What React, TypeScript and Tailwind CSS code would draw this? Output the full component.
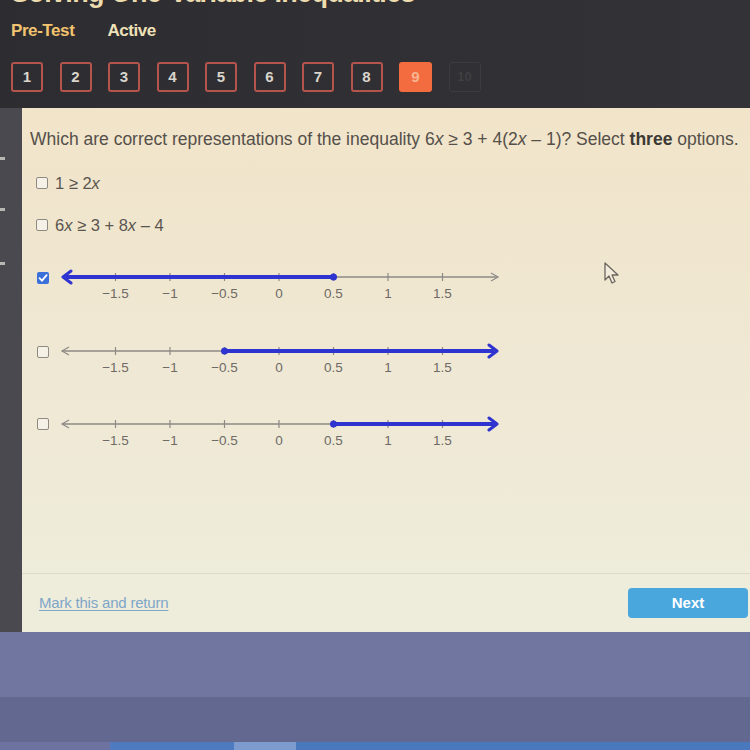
const tick = (v: number) => 224 + v * 109;

const labels: [number, string][] = [
  [-1.5, "\u22121.5"],
  [-1, "\u22121"],
  [-0.5, "\u22120.5"],
  [0, "0"],
  [0.5, "0.5"],
  [1, "1"],
  [1.5, "1.5"],
];

interface NumberLineProps {
  from: number | null; // null = left arrow
  to: number | null; // null = right arrow
}

function NumberLine({ from, to }: NumberLineProps) {
  const left = 7;
  const right = 443;
  const y = 8;
  const x1 = from === null ? left + 4 : tick(from);
  const x2 = to === null ? right - 4 : tick(to);
  return (
    <svg width="460" height="36" viewBox="0 0 460 36" className="block">
      <line x1={left} y1={y} x2={right} y2={y} stroke="#8d8a86" strokeWidth="1.4" />
      {from !== null && (
        <path d={`M${left + 7} ${y - 4} L${left} ${y} L${left + 7} ${y + 4}`} fill="none" stroke="#8d8a86" strokeWidth="1.2" />
      )}
      {to !== null && (
        <path d={`M${right - 7} ${y - 4} L${right} ${y} L${right - 7} ${y + 4}`} fill="none" stroke="#8d8a86" strokeWidth="1.2" />
      )}
      {labels.map(([v, t]) => (
        <g key={t}>
          <line x1={tick(v)} y1={y - 4} x2={tick(v)} y2={y + 4} stroke="#8d8a86" strokeWidth="1.2" />
          <text
            x={tick(v)}
            y={y + 21}
            textAnchor="middle"
            fontSize="13.5"
            fill="#6e6a66"
            fontFamily="'Liberation Sans', Arial, sans-serif"
          >
            {t}
          </text>
        </g>
      ))}
      <line x1={x1} y1={y} x2={x2} y2={y} stroke="#2f33cf" strokeWidth="4" />
      {from === null && (
        <path d={`M${left + 9} ${y - 6} L${left + 1} ${y} L${left + 9} ${y + 6}`} fill="none" stroke="#2f33cf" strokeWidth="3" strokeLinejoin="round" strokeLinecap="round" />
      )}
      {to === null && (
        <path d={`M${right - 9} ${y - 6} L${right - 1} ${y} L${right - 9} ${y + 6}`} fill="none" stroke="#2f33cf" strokeWidth="3" strokeLinejoin="round" strokeLinecap="round" />
      )}
      {from !== null && <circle cx={x1} cy={y} r="3.5" fill="#2f33cf" />}
      {to !== null && <circle cx={x2} cy={y} r="3.5" fill="#2f33cf" />}
    </svg>
  );
}

function Checkbox({ checked = false }: { checked?: boolean }) {
  if (checked) {
    return (
      <span className="shrink-0 w-[12px] h-[12px] rounded-[2px] bg-[#3b6fd9] flex items-center justify-center">
        <svg width="10" height="10" viewBox="0 0 10 10">
          <path d="M1.5 5.2 L4 7.6 L8.6 2.2" fill="none" stroke="white" strokeWidth="1.8" strokeLinecap="round" />
        </svg>
      </span>
    );
  }
  return <span className="shrink-0 block w-[12px] h-[12px] rounded-[2px] border border-[#8e8a84] bg-[#f5f1e6]" />;
}

export default function App() {
  const boxes = [1, 2, 3, 4, 5, 6, 7, 8];
  return (
    <div
      className="w-[750px] h-[750px] overflow-hidden flex flex-col bg-[#2e2d31]"
      style={{ fontFamily: "'Liberation Sans', Arial, sans-serif" }}
    >
      {/* header */}
      <div className="h-[108px] shrink-0 px-[11px] flex flex-col bg-gradient-to-r from-[#2d2c30] to-[#333236]">
        <h1 className="mt-[-20px] text-[27px] leading-none font-bold text-[#ecdcae] tracking-tight whitespace-nowrap">
          Solving One-Variable Inequalities
        </h1>
        <div className="mt-[14px] flex gap-[33px] text-[17px] font-bold leading-[20px] tracking-tight">
          <span className="text-[#f2c46f]">Pre-Test</span>
          <span className="text-[#efe2b8]">Active</span>
        </div>
        <div className="mt-[21px] flex gap-[16.5px]">
          {boxes.map((n) => (
            <div
              key={n}
              className="w-[32px] h-[30px] rounded-[3px] border-2 border-[#b5544d] flex items-center justify-center text-[15px] font-bold text-[#d9d5cc]"
            >
              {n}
            </div>
          ))}
          <div className="w-[33px] h-[30px] rounded-[3px] bg-[#f36c3f] flex items-center justify-center text-[15px] font-bold text-[#f7b592]">
            9
          </div>
          <div className="w-[32px] h-[30px] rounded-[3px] border border-[#3c3b3f] flex items-center justify-center text-[13px] font-bold text-[#3f3e42]">
            10
          </div>
        </div>
      </div>

      {/* body */}
      <div className="h-[524px] shrink-0 flex">
        <div className="w-[22px] shrink-0 bg-[#4a4950] flex flex-col">
          <span className="mt-[49px] w-[5px] h-[3px] bg-[#b9b7b4]" />
          <span className="mt-[48px] w-[5px] h-[3px] bg-[#b9b7b4]" />
          <span className="mt-[51px] w-[5px] h-[3px] bg-[#b9b7b4]" />
        </div>
        <div className="relative flex-1 flex flex-col bg-gradient-to-b from-[#f1e4c9] via-[#efe8d4] to-[#eeeddc]">
          <div className="pl-[8px] pt-[21px] flex flex-col">
            <p className="text-[17.5px] leading-[20px] text-[#55504a] whitespace-nowrap">
              Which are correct representations of the inequality 6<i>x</i> ≥ 3 + 4(2<i>x</i> – 1)? Select{" "}
              <b className="text-[#3d3935]">three</b> options.
            </p>
            <div className="mt-[24px] ml-[6px] flex items-center gap-[7px] text-[16.5px] leading-[20px] text-[#5a5550]">
              <Checkbox />
              <span>
                1 ≥ 2<i>x</i>
              </span>
            </div>
            <div className="mt-[22px] ml-[6px] flex items-center gap-[7px] text-[16.5px] leading-[20px] text-[#5a5550]">
              <Checkbox />
              <span>
                6<i>x</i> ≥ 3 + 8<i>x</i> – 4
              </span>
            </div>

            <div className="mt-[34px] ml-[7px] flex items-start gap-[6px]">
              <span className="mt-[3px]">
                <Checkbox checked />
              </span>
              <NumberLine from={null} to={0.5} />
            </div>
            <div className="mt-[38px] ml-[7px] flex items-start gap-[6px]">
              <span className="mt-[3px]">
                <Checkbox />
              </span>
              <NumberLine from={-0.5} to={null} />
            </div>
            <div className="mt-[37px] ml-[7px] flex items-start gap-[6px]">
              <span className="mt-[2px]">
                <Checkbox />
              </span>
              <NumberLine from={0.5} to={null} />
            </div>
          </div>

          {/* cursor */}
          <svg className="absolute left-[581px] top-[153px]" width="18" height="26" viewBox="0 0 18 26">
            <path
              d="M2 2 L2 19 L6 15 L9 22 L12 20.5 L9 14 L15 14 Z"
              fill="#f3ecdc"
              stroke="#6a6660"
              strokeWidth="1.3"
              strokeLinejoin="round"
            />
          </svg>

          <div className="mt-auto border-t border-[#dcdacb] flex items-center justify-between pt-[14px] pb-[14px] pl-[17px]">
            <a className="text-[15px] text-[#7ea6c8] underline underline-offset-2 tracking-[-0.2px]">Mark this and return</a>
            <button className="w-[120px] h-[30px] mr-[2px] rounded-[4px] bg-[#4aa7de] text-white text-[15px] font-bold">
              Next
            </button>
          </div>
        </div>
      </div>

      {/* below panel */}
      <div className="h-[65px] shrink-0 bg-[#7176a1]" />
      <div className="h-[45px] shrink-0 bg-[#62688f]" />
      <div className="h-[8px] shrink-0 flex">
        <div className="w-[110px] bg-[#6d72a0]" />
        <div className="w-[124px] bg-[#4e7bbf]" />
        <div className="w-[62px] bg-[#7e9bd0]" />
        <div className="flex-1 bg-[#4a78bd]" />
      </div>
    </div>
  );
}
